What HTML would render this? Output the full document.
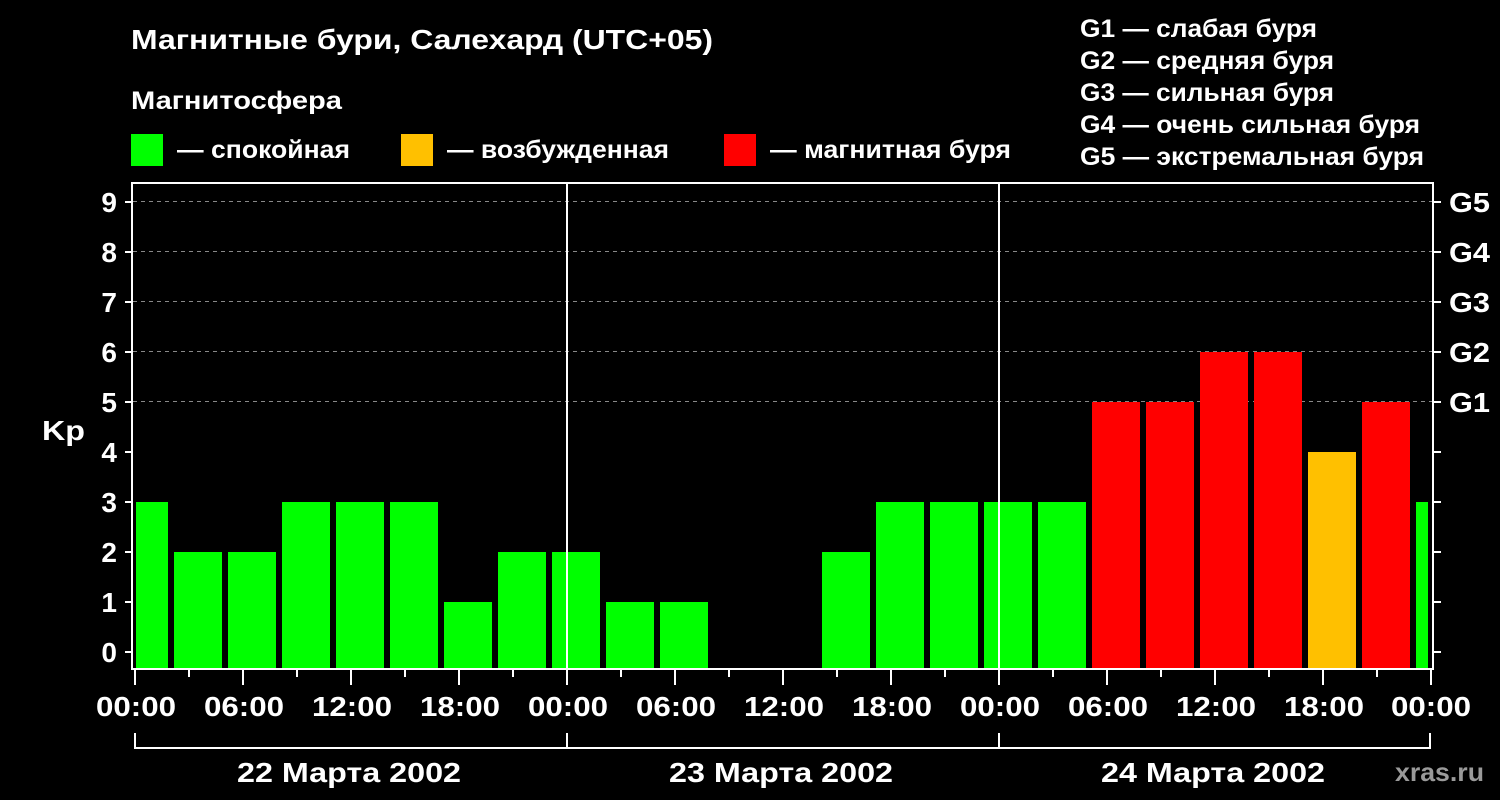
<!DOCTYPE html>
<html><head><meta charset="utf-8"><style>
html,body{margin:0;padding:0;background:#000;width:1500px;height:800px;overflow:hidden}
svg{display:block}
text{font-family:"Liberation Sans",Arial,sans-serif;font-weight:bold;fill:#fff}
</style></head><body>
<svg width="1500" height="800" viewBox="0 0 1500 800" xmlns="http://www.w3.org/2000/svg">
<rect width="1500" height="800" fill="#000"/>
<text x="131" y="49" font-size="28" textLength="582" lengthAdjust="spacingAndGlyphs">Магнитные бури, Салехард (UTC+05)</text>
<text x="131" y="109" font-size="25" textLength="211" lengthAdjust="spacingAndGlyphs">Магнитосфера</text>
<rect x="131" y="134" width="32" height="32" fill="#00ff00"/>
<text x="177" y="158" font-size="25" textLength="173" lengthAdjust="spacingAndGlyphs">— спокойная</text>
<rect x="401" y="134" width="32" height="32" fill="#ffc000"/>
<text x="447" y="158" font-size="25" textLength="222" lengthAdjust="spacingAndGlyphs">— возбужденная</text>
<rect x="724" y="134" width="32" height="32" fill="#ff0000"/>
<text x="770" y="158" font-size="25" textLength="241" lengthAdjust="spacingAndGlyphs">— магнитная буря</text>
<g font-size="25">
<text x="1080" y="37" textLength="237" lengthAdjust="spacingAndGlyphs">G1 — слабая буря</text>
<text x="1080" y="69" textLength="254" lengthAdjust="spacingAndGlyphs">G2 — средняя буря</text>
<text x="1080" y="101" textLength="254" lengthAdjust="spacingAndGlyphs">G3 — сильная буря</text>
<text x="1080" y="133" textLength="340" lengthAdjust="spacingAndGlyphs">G4 — очень сильная буря</text>
<text x="1080" y="165" textLength="344" lengthAdjust="spacingAndGlyphs">G5 — экстремальная буря</text>
</g>
<g stroke="#888" stroke-width="1" stroke-dasharray="4,4">
<line x1="133" y1="201.5" x2="1432" y2="201.5"/>
<line x1="133" y1="251.5" x2="1432" y2="251.5"/>
<line x1="133" y1="301.5" x2="1432" y2="301.5"/>
<line x1="133" y1="351.5" x2="1432" y2="351.5"/>
<line x1="133" y1="401.5" x2="1432" y2="401.5"/>
</g>
<g fill="#00ff00">
<rect x="136" y="502" width="32" height="166"/>
<rect x="174" y="552" width="48" height="116"/>
<rect x="228" y="552" width="48" height="116"/>
<rect x="282" y="502" width="48" height="166"/>
<rect x="336" y="502" width="48" height="166"/>
<rect x="390" y="502" width="48" height="166"/>
<rect x="444" y="602" width="48" height="66"/>
<rect x="498" y="552" width="48" height="116"/>
<rect x="552" y="552" width="48" height="116"/>
<rect x="606" y="602" width="48" height="66"/>
<rect x="660" y="602" width="48" height="66"/>
<rect x="822" y="552" width="48" height="116"/>
<rect x="876" y="502" width="48" height="166"/>
<rect x="930" y="502" width="48" height="166"/>
<rect x="984" y="502" width="48" height="166"/>
<rect x="1038" y="502" width="48" height="166"/>
<rect x="1416" y="502" width="12" height="166"/>
</g>
<g fill="#ff0000">
<rect x="1092" y="402" width="48" height="266"/>
<rect x="1146" y="402" width="48" height="266"/>
<rect x="1200" y="352" width="48" height="316"/>
<rect x="1254" y="352" width="48" height="316"/>
<rect x="1362" y="402" width="48" height="266"/>
</g>
<rect x="1308" y="452" width="48" height="216" fill="#ffc000"/>
<g stroke="#fff" stroke-width="2" fill="none">
<rect x="132" y="183" width="1301" height="486"/>
<line x1="567" y1="183" x2="567" y2="669"/>
<line x1="999" y1="183" x2="999" y2="669"/>
</g>
<g stroke="#fff" stroke-width="2">
<path d="M125 652H132M125 602H132M125 552H132M125 502H132M125 452H132M125 402H132M125 352H132M125 302H132M125 252H132M125 202H132"/>
<path d="M1433 652H1441M1433 602H1441M1433 552H1441M1433 502H1441M1433 452H1441M1433 402H1441M1433 352H1441M1433 302H1441M1433 252H1441M1433 202H1441"/>
<path d="M135 670V685M189 670V677M243 670V685M297 670V677M351 670V685M405 670V677M459 670V685M513 670V677M567 670V685M621 670V677M675 670V685M729 670V677M783 670V685M837 670V677M891 670V685M945 670V677M999 670V685M1053 670V677M1107 670V685M1161 670V677M1215 670V685M1269 670V677M1323 670V685M1377 670V677M1431 670V685"/>
<path d="M135 733V749M567 733V749M999 733V749M1430 733V749M135 748H1430"/>
</g>
<g font-size="28" text-anchor="end">
<text x="117" y="212">9</text><text x="117" y="262">8</text><text x="117" y="312">7</text>
<text x="117" y="362">6</text><text x="117" y="412">5</text><text x="117" y="462">4</text>
<text x="117" y="512">3</text><text x="117" y="562">2</text><text x="117" y="612">1</text>
<text x="117" y="662">0</text>
</g>
<text x="42" y="440" font-size="28" textLength="43" lengthAdjust="spacingAndGlyphs">Kp</text>
<g font-size="28">
<text x="1449" y="212" textLength="41" lengthAdjust="spacingAndGlyphs">G5</text><text x="1449" y="262" textLength="41" lengthAdjust="spacingAndGlyphs">G4</text><text x="1449" y="312" textLength="41" lengthAdjust="spacingAndGlyphs">G3</text>
<text x="1449" y="362" textLength="41" lengthAdjust="spacingAndGlyphs">G2</text><text x="1449" y="412" textLength="41" lengthAdjust="spacingAndGlyphs">G1</text>
</g>
<g font-size="28" text-anchor="middle">
<text x="136" y="716" textLength="80" lengthAdjust="spacingAndGlyphs">00:00</text><text x="244" y="716" textLength="80" lengthAdjust="spacingAndGlyphs">06:00</text><text x="352" y="716" textLength="80" lengthAdjust="spacingAndGlyphs">12:00</text><text x="460" y="716" textLength="80" lengthAdjust="spacingAndGlyphs">18:00</text>
<text x="568" y="716" textLength="80" lengthAdjust="spacingAndGlyphs">00:00</text><text x="676" y="716" textLength="80" lengthAdjust="spacingAndGlyphs">06:00</text><text x="784" y="716" textLength="80" lengthAdjust="spacingAndGlyphs">12:00</text><text x="892" y="716" textLength="80" lengthAdjust="spacingAndGlyphs">18:00</text>
<text x="1000" y="716" textLength="80" lengthAdjust="spacingAndGlyphs">00:00</text><text x="1108" y="716" textLength="80" lengthAdjust="spacingAndGlyphs">06:00</text><text x="1216" y="716" textLength="80" lengthAdjust="spacingAndGlyphs">12:00</text><text x="1324" y="716" textLength="80" lengthAdjust="spacingAndGlyphs">18:00</text>
<text x="1431" y="716" textLength="80" lengthAdjust="spacingAndGlyphs">00:00</text>
<text x="349" y="782" textLength="224" lengthAdjust="spacingAndGlyphs">22 Марта 2002</text>
<text x="781" y="782" textLength="224" lengthAdjust="spacingAndGlyphs">23 Марта 2002</text>
<text x="1213" y="782" textLength="224" lengthAdjust="spacingAndGlyphs">24 Марта 2002</text>
</g>
<text x="1395" y="781" font-size="26" textLength="89" lengthAdjust="spacingAndGlyphs" style="fill:#9a9a9a">xras.ru</text>
</svg>
</body></html>
